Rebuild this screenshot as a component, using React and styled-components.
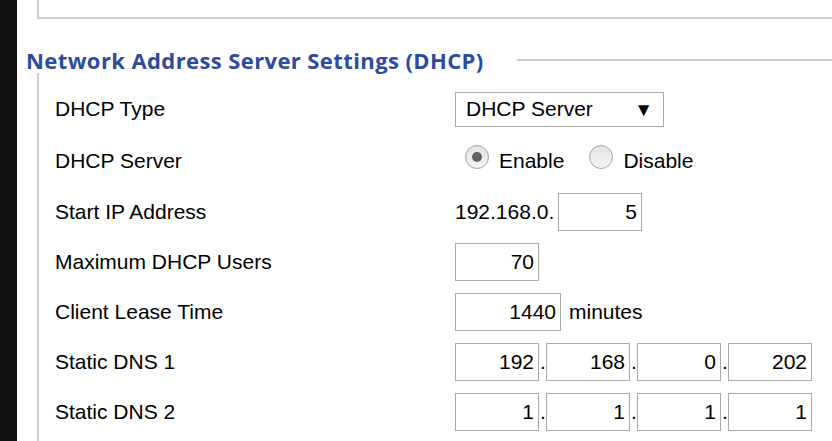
import React from "react";
import styled, { createGlobalStyle } from "styled-components";

const GlobalStyle = createGlobalStyle`
  html, body {
    margin: 0;
    padding: 0;
    background: #fff;
  }
  body {
    font-family: "Liberation Sans", Arial, sans-serif;
    color: #000;
    overflow: hidden;
  }
`;

const Page = styled.div`
  display: flex;
  height: 100vh;
  overflow: hidden;
`;

const Sidebar = styled.div`
  width: 17px;
  flex-shrink: 0;
  background: #111;
`;

const Main = styled.div`
  flex: 1;
  display: flex;
  flex-direction: column;
  padding-left: 20px;
`;

const TopBox = styled.div`
  height: 17px;
  border-left: 2px solid #ccc;
  border-bottom: 2px solid #ccc;
`;

const LegendRow = styled.div`
  display: flex;
  align-items: center;
  margin: 29px 0 0 -11px;
  height: 24px;
`;

const Legend = styled.h2`
  margin: 0;
  font-family: "Open Sans", "Liberation Sans", sans-serif;
  font-size: 22px;
  font-weight: 700;
  letter-spacing: 0.4px;
  line-height: 24px;
  color: #2d4c9b;
  white-space: nowrap;
`;

const LegendLine = styled.div`
  flex: 1;
  height: 2px;
  margin-left: 33px;
  background: #ccc;
`;

const FieldBody = styled.div`
  flex: 1;
  margin-top: 1px;
  border-left: 2px solid #ccc;
  padding: 11px 0 0 16px;
`;

const Row = styled.div`
  display: grid;
  grid-template-columns: 400px 1fr;
  align-items: center;
  height: ${(p) => p.$h || 50}px;
`;

const Label = styled.div`
  font-size: 21px;
`;

const Value = styled.div`
  display: flex;
  align-items: ${(p) => p.$align || "baseline"};
  font-size: 21px;
`;

const Select = styled.div`
  display: flex;
  align-items: center;
  justify-content: space-between;
  box-sizing: border-box;
  width: 209px;
  height: 35px;
  padding: 0 10px 0 10px;
  border: 1px solid #aaa;
  font-size: 21px;
`;

const Arrow = styled.span`
  font-size: 19px;
  line-height: 1;
`;

const RadioOption = styled.label`
  display: flex;
  align-items: center;
  margin-right: 15px;
  font-size: 21px;
`;

const Radio = styled.span`
  width: 22px;
  height: 22px;
  border-radius: 50%;
  border: 1px solid #a5a5a5;
  background: linear-gradient(#e4e4e4, #f4f4f4);
  margin: 0 10px 8px 10px;
  display: flex;
  align-items: center;
  justify-content: center;

  &::after {
    content: "";
    width: 10px;
    height: 10px;
    border-radius: 50%;
    background: ${(p) => (p.$checked ? "#636363" : "transparent")};
  }
`;

const Prefix = styled.span`
  width: 103px;
`;

const Field = styled.input`
  width: ${(p) => p.$w || 84}px;
  height: 38px;
  box-sizing: border-box;
  border: 1px solid #aaa;
  padding: 0 4px 0 0;
  margin: 0;
  text-align: right;
  font-family: "Liberation Sans", Arial, sans-serif;
  font-size: 21px;
  color: #000;
  background: #fff;
  outline: none;
`;

const Dot = styled.span`
  width: 7px;
  padding-left: 1px;
  box-sizing: border-box;
`;

const Unit = styled.span`
  margin-left: 8px;
`;

const IpField = ({ parts }) => (
  <Value>
    {parts.map((p, i) => (
      <React.Fragment key={i}>
        <Field readOnly value={p} />
        {i < parts.length - 1 && <Dot>.</Dot>}
      </React.Fragment>
    ))}
  </Value>
);

export default function App() {
  return (
    <>
      <GlobalStyle />
      <Page>
        <Sidebar />
        <Main>
          <TopBox />
          <LegendRow>
            <Legend>Network Address Server Settings (DHCP)</Legend>
            <LegendLine />
          </LegendRow>
          <FieldBody>
            <Row>
              <Label>DHCP Type</Label>
              <Value $align="center">
                <Select>
                  <span>DHCP Server</span>
                  <Arrow>▼</Arrow>
                </Select>
              </Value>
            </Row>
            <Row $h={53}>
              <Label>DHCP Server</Label>
              <Value $align="center">
                <RadioOption>
                  <Radio $checked />
                  Enable
                </RadioOption>
                <RadioOption>
                  <Radio />
                  Disable
                </RadioOption>
              </Value>
            </Row>
            <Row>
              <Label>Start IP Address</Label>
              <Value>
                <Prefix>192.168.0.</Prefix>
                <Field readOnly value="5" />
              </Value>
            </Row>
            <Row>
              <Label>Maximum DHCP Users</Label>
              <Value>
                <Field readOnly value="70" />
              </Value>
            </Row>
            <Row>
              <Label>Client Lease Time</Label>
              <Value>
                <Field readOnly value="1440" $w={106} />
                <Unit>minutes</Unit>
              </Value>
            </Row>
            <Row>
              <Label>Static DNS 1</Label>
              <IpField parts={["192", "168", "0", "202"]} />
            </Row>
            <Row>
              <Label>Static DNS 2</Label>
              <IpField parts={["1", "1", "1", "1"]} />
            </Row>
          </FieldBody>
        </Main>
      </Page>
    </>
  );
}
